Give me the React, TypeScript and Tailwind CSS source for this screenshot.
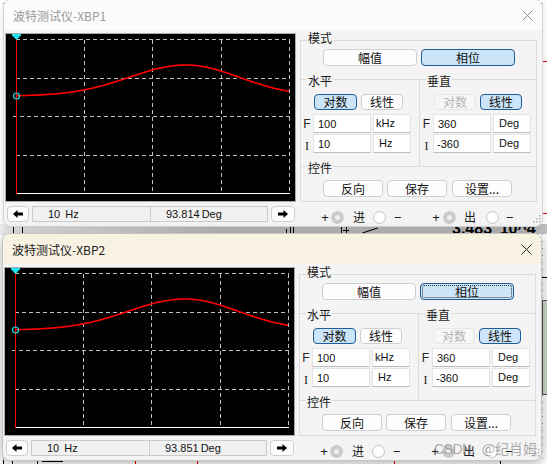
import React from "react";

const CJK = "font-['Noto_Sans_CJK_SC','Noto_Sans',sans-serif]";
const NUM = "font-['Liberation_Sans','Noto_Sans_CJK_SC',sans-serif]";

function curvePath() {
  const pts: string[] = [];
  for (let x = 10; x <= 283; x += 1) {
    const d = x - 180;
    const s = d < 0 ? 80 : 75;
    const y = 62 - 31 * Math.exp(-((d / s) * (d / s)));
    pts.push(`${x},${y.toFixed(2)}`);
  }
  return "M" + pts.join(" L");
}

function Plot() {
  const dash = "#bfbfbf";
  return (
    <svg width="289" height="167" className="block">
      <rect width="289" height="167" fill="#000" />
      <g stroke={dash} strokeWidth="1" strokeDasharray="4 3" shapeRendering="crispEdges">
        <line x1="10" y1="5.5" x2="284" y2="5.5" />
        <line x1="10" y1="44.5" x2="284" y2="44.5" />
        <line x1="7" y1="82.5" x2="284" y2="82.5" />
        <line x1="10" y1="121.5" x2="284" y2="121.5" />
        <line x1="78.5" y1="6" x2="78.5" y2="159" />
        <line x1="146.5" y1="6" x2="146.5" y2="159" />
        <line x1="215.5" y1="6" x2="215.5" y2="159" />
        <line x1="283.5" y1="6" x2="283.5" y2="159" />
      </g>
      <line x1="10" y1="159.5" x2="284" y2="159.5" stroke="#ffffff" shapeRendering="crispEdges" />
      <line x1="10.5" y1="2" x2="10.5" y2="160" stroke="#ff0000" shapeRendering="crispEdges" />
      <path d={curvePath()} stroke="#ff0000" strokeWidth="1.6" fill="none" />
      <rect x="6" y="0" width="9" height="2" fill="#22e4f2" />
      <polygon points="6,1 15,1 10.5,6" fill="#22e4f2" />
      <circle cx="10.5" cy="62" r="3" stroke="#22e4f2" strokeWidth="1.2" fill="none" />
    </svg>
  );
}

function ArrowBtn({ dir, className }: { dir: "left" | "right"; className: string }) {
  return (
    <div
      className={`h-[16px] rounded-[4px] border border-[#cfcfcf] bg-[#fdfdfd] flex items-center justify-center ${className}`}
    >
      <svg width="10" height="8" viewBox="0 0 10 8">
        {dir === "left" ? (
          <polygon points="0,4 4.5,0 4.5,2.5 10,2.5 10,5.5 4.5,5.5 4.5,8" fill="#000" />
        ) : (
          <polygon points="10,4 5.5,0 5.5,2.5 0,2.5 0,5.5 5.5,5.5 5.5,8" fill="#000" />
        )}
      </svg>
    </div>
  );
}

function Btn({
  children,
  className,
  sel,
  dis,
  focus,
}: {
  children: React.ReactNode;
  className: string;
  sel?: boolean;
  dis?: boolean;
  focus?: boolean;
}) {
  const look = dis
    ? "border-[#e6e6e6] bg-[#f7f7f7] text-[#b5b5b5]"
    : sel
    ? "border-[#1f5d99] bg-[#cce4f7] text-[#111]"
    : "border-[#cfcfcf] bg-[#fdfdfd] text-[#111]";
  return (
    <div
      className={`flex items-center justify-center rounded-[4px] border text-[12px] leading-none ${look} ${
        focus ? "outline outline-1 outline-dotted outline-[#333] outline-offset-[-3px]" : ""
      } ${className}`}
    >
      {children}
    </div>
  );
}

function Field({ children, className }: { children: React.ReactNode; className: string }) {
  return (
    <div
      className={`h-[19px] bg-white border border-[#e4e4e4] border-b-[#bcbcbc] flex text-[11px] leading-[14px] text-[#111] ${NUM} ${className}`}
    >
      {children}
    </div>
  );
}

function SecLabel({ children, className }: { children: React.ReactNode; className: string }) {
  return (
    <div className={`h-[14px] flex ${className}`}>
      <span className="ml-[6px] px-[1px] bg-[#f4f4f4] text-[12px] leading-[14px] text-[#1a1a1a]">{children}</span>
    </div>
  );
}

function Panel({ active }: { active: boolean }) {
  return (
    <div className={`mt-[10px] border border-[#dcdcdc] flex flex-col ${CJK}`}>
      <SecLabel className="-mt-[10px]">模式</SecLabel>
      <div className="mt-[4px] pl-[22px] flex">
        <Btn className="w-[94px] h-[17px]">幅值</Btn>
        <Btn sel focus={active} className="ml-[4px] w-[94px] h-[17px]">
          相位
        </Btn>
      </div>
      <div className="mt-[13px] border-t border-[#dcdcdc] flex">
        <div className="w-[119px] border-r border-[#dcdcdc] flex flex-col pb-[11px]">
          <SecLabel className="-mt-[6px]">水平</SecLabel>
          <div className="mt-[6px] pl-[13px] flex">
            <Btn sel className="w-[43px] h-[16px]">
              对数
            </Btn>
            <Btn className="ml-[4px] w-[42px] h-[16px]">线性</Btn>
          </div>
          <div className="mt-[4px] flex">
            <div className={`w-[12px] flex items-center justify-center text-[12px] text-[#222] ${NUM}`}>F</div>
            <Field className="w-[58px] items-center pl-[4px]">100</Field>
            <Field className="ml-[2px] w-[38px] pl-[2px] pt-[1px]">kHz</Field>
          </div>
          <div className="mt-[1px] flex">
            <div className="w-[12px] flex items-center justify-center pt-[3px] text-[12px] text-[#222] font-['Liberation_Serif',serif]">
              I
            </div>
            <Field className="w-[58px] items-center pl-[4px]">10</Field>
            <Field className="ml-[2px] w-[38px] pl-[5px] pt-[1px]">Hz</Field>
          </div>
        </div>
        <div className="flex-1 flex flex-col pb-[11px]">
          <SecLabel className="-mt-[6px]">垂直</SecLabel>
          <div className="mt-[6px] pl-[14px] flex">
            <Btn dis className="w-[42px] h-[16px]">
              对数
            </Btn>
            <Btn sel className="ml-[4px] w-[42px] h-[16px]">
              线性
            </Btn>
          </div>
          <div className="mt-[4px] flex">
            <div className={`w-[13px] flex items-center justify-center text-[12px] text-[#222] ${NUM}`}>F</div>
            <Field className="w-[58px] items-center pl-[4px]">360</Field>
            <Field className="ml-[2px] w-[38px] pl-[5px] pt-[1px]">Deg</Field>
          </div>
          <div className="mt-[1px] flex">
            <div className="w-[13px] flex items-center justify-center pt-[3px] text-[12px] text-[#222] font-['Liberation_Serif',serif]">
              I
            </div>
            <Field className="w-[58px] items-center pl-[3px]">-360</Field>
            <Field className="ml-[2px] w-[38px] pl-[5px] pt-[1px]">Deg</Field>
          </div>
        </div>
      </div>
      <div className="border-t border-[#dcdcdc] flex flex-col pb-[4px]">
        <SecLabel className="-mt-[6px]">控件</SecLabel>
        <div className="mt-[5px] pl-[22px] flex">
          <Btn className="w-[60px] h-[17px]">反向</Btn>
          <Btn className="ml-[4px] w-[60px] h-[17px]">保存</Btn>
          <Btn className="ml-[5px] w-[60px] h-[17px]">设置...</Btn>
        </div>
      </div>
    </div>
  );
}

function RadioOn({ className }: { className: string }) {
  return (
    <div className={`w-[13px] h-[13px] rounded-full bg-[#cbcbcb] flex items-center justify-center ${className}`}>
      <div className="w-[5px] h-[5px] rounded-full bg-[#eeeeee]" />
    </div>
  );
}

function RadioOff({ className }: { className: string }) {
  return <div className={`w-[13px] h-[13px] rounded-full border border-[#c4c4c4] bg-white ${className}`} />;
}

function RadioRow() {
  return (
    <div className={`mt-[7px] h-[16px] flex items-center text-[#1a1a1a] ${CJK}`}>
      <span className={`ml-[21px] w-[8px] text-center text-[13px] leading-none ${NUM}`}>+</span>
      <RadioOn className="ml-[2px]" />
      <span className="ml-[9px] w-[12px] text-[12px] leading-none">进</span>
      <RadioOff className="ml-[8px]" />
      <span className={`ml-[8px] w-[7px] text-[13px] leading-none ${NUM}`}>−</span>
      <span className={`ml-[31px] w-[8px] text-center text-[13px] leading-none ${NUM}`}>+</span>
      <RadioOn className="ml-[3px]" />
      <span className="ml-[8px] w-[12px] text-[12px] leading-none">出</span>
      <RadioOff className="ml-[10px]" />
      <span className={`ml-[7px] w-[7px] text-[13px] leading-none ${NUM}`}>−</span>
    </div>
  );
}

function Window({
  title,
  active,
  val,
  className,
}: {
  title: string;
  active: boolean;
  val: string;
  className: string;
}) {
  return (
    <div
      className={`absolute w-[540px] h-[228px] rounded-[8px] border bg-[#f4f4f4] overflow-hidden flex flex-col ${
        active
          ? "border-[#c4c4c4] shadow-[0_3px_14px_rgba(0,0,0,0.3)]"
          : "border-[#d6d6d6] shadow-[0_2px_6px_rgba(0,0,0,0.12)]"
      } ${className}`}
    >
      <div
        className={`h-[30px] shrink-0 flex items-center justify-between pl-[9px] pr-[9px] ${
          active ? "bg-[#f8f2e3] text-[#1b1b1b]" : "bg-[#fbfbfb] text-[#9a9a9a]"
        }`}
      >
        <span className={`text-[12px] leading-none pt-[1px] ${CJK}`}>{title}</span>
        <svg width="11" height="11" viewBox="0 0 11 11">
          <path d="M0.5 0.5 L10.5 10.5 M10.5 0.5 L0.5 10.5" stroke={active ? "#222222" : "#8f8f8f"} strokeWidth="1" />
        </svg>
      </div>
      <div className="flex flex-1">
        <div className="ml-[1px] mt-[3px] flex flex-col">
          <div className="w-[291px] h-[169px] border border-[#a9a9a9] bg-black">
            <Plot />
          </div>
          <div className={`mt-[4px] h-[16px] flex pl-[2px] text-[11px] text-[#111] ${NUM}`}>
            <ArrowBtn dir="left" className="w-[22px]" />
            <div className="ml-[3px] w-[119px] h-[16px] border border-[#cacaca] bg-[#f1f1f1] flex items-center pl-[15px]">
              10<span className="ml-[5px]">Hz</span>
            </div>
            <div className="w-[117px] h-[16px] border border-l-0 border-[#cacaca] bg-[#f1f1f1] flex items-center pl-[15px]">
              {val}
              <span className="ml-[2px]">Deg</span>
            </div>
            <ArrowBtn dir="right" className="ml-[3px] w-[24px]" />
          </div>
        </div>
        <div className="ml-[4px] w-[237px] flex flex-col">
          <Panel active={active} />
          <RadioRow />
        </div>
      </div>
      <svg width="8" height="8" viewBox="0 0 8 8" className="absolute right-[1px] bottom-[3px]">
        <g fill="#b3b3b3">
          <rect x="6" y="0" width="1.5" height="1.5" />
          <rect x="3" y="3" width="1.5" height="1.5" />
          <rect x="6" y="3" width="1.5" height="1.5" />
          <rect x="0" y="6" width="1.5" height="1.5" />
          <rect x="3" y="6" width="1.5" height="1.5" />
          <rect x="6" y="6" width="1.5" height="1.5" />
        </g>
      </svg>
    </div>
  );
}

export default function App() {
  return (
    <div className="relative w-[547px] h-[464px] overflow-hidden bg-white bg-[radial-gradient(circle,#9a9a9a_0.7px,transparent_1px)] bg-[length:7px_7px]">
      {/* schematic behind the windows */}
      <div className="absolute left-0 top-[224px] w-[547px] h-[10px] bg-[linear-gradient(to_right,#ececec,#bfbfbf_40%)]" />
      <div className="absolute left-[13px] top-[224px] w-px h-[10px] bg-black" />
      <div className="absolute left-[22px] top-[224px] w-px h-[10px] bg-black" />
      <div className="absolute left-[286px] top-[229px] w-px h-[5px] bg-black" />
      <div className="absolute left-[290px] top-[226px] w-px h-[8px] bg-black" />
      <div className="absolute left-[293px] top-[226px] w-px h-[8px] bg-black" />
      <div className="absolute left-[341px] top-[226px] w-px h-[8px] bg-black" />
      <div className="absolute left-[343px] top-[230px] w-[6px] h-px bg-black" />
      <div className="absolute left-[346px] top-[227px] w-px h-[7px] bg-black" />
      <div className="absolute left-[362px] top-[230px] w-[16px] h-px bg-black -rotate-[18deg]" />
      <div className="absolute left-[452px] top-[221px] text-[16px] leading-[16px] font-bold text-black font-['Liberation_Sans',sans-serif]">
        3.483"10^4
      </div>
      <div className="absolute left-[542px] top-[61px] w-[5px] h-px bg-[#e00000]" />
      <div className="absolute left-[542px] top-[213px] w-[5px] h-px bg-[#e00000]" />
      <div className="absolute left-[541px] top-[277px] w-[6px] h-px bg-black" />
      <div className="absolute left-[542px] top-[300px] w-[5px] h-[95px] border-l border-t border-b border-[#555] bg-[#c9dcc2]" />
      <div className="absolute left-[3px] top-[460px] w-px h-[4px] bg-black" />
      <div className="absolute left-[12px] top-[460px] w-px h-[4px] bg-black" />
      <div className="absolute left-[37px] top-[460px] w-px h-[4px] bg-black" />
      <div className="absolute left-[42px] top-[461px] w-[21px] h-px bg-black" />
      <div className="absolute left-[135px] top-[460px] w-px h-[4px] bg-[#e00000]" />
      <div className="absolute left-[197px] top-[460px] w-px h-[4px] bg-[#e00000]" />
      <div className="absolute left-[394px] top-[460px] w-px h-[4px] bg-[#e00000]" />
      <div className="absolute left-[500px] top-[460px] w-px h-[4px] bg-black" />

      <Window title="波特测试仪-XBP1" active={false} val="93.814" className="left-[3px] top-[-1px]" />
      <Window title="波特测试仪-XBP2" active val="93.851" className="left-[2px] top-[233px]" />

      <div
        className={`absolute left-[434px] top-[438px] flex items-baseline text-[rgba(105,105,105,0.55)] ${CJK}`}
      >
        <span className="text-[14px] tracking-[-0.5px] font-['Liberation_Sans',sans-serif]">CSDN</span>
        <span className="ml-[10px] text-[14px]">@纪肖姆</span>
      </div>
    </div>
  );
}
